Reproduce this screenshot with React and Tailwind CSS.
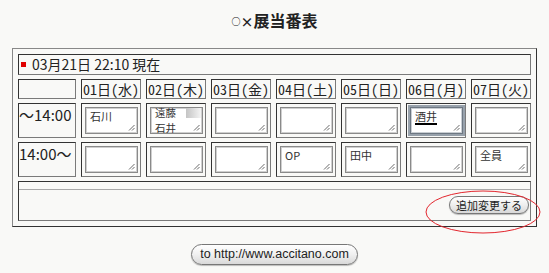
const days = ["01日(水)", "02日(木)", "03日(金)", "04日(土)", "05日(日)", "06日(月)", "07日(火)"];

const rows = [
  { label: "〜14:00", values: ["石川", "遠藤\n石井", "", "", "", "酒井", ""], focus: 5 },
  { label: "14:00〜", values: ["", "", "", "OP", "田中", "", "全員"], focus: -1 },
];

const jp = "font-['Noto_Sans_CJK_JP','Noto_Sans',sans-serif]";
const cell = "border border-t-[#333] border-l-[#333] border-b-[#7a7a7a] border-r-[#7a7a7a]";

function Grip() {
  return (
    <svg className="absolute right-[2px] bottom-[2px]" width="7" height="7" viewBox="0 0 7 7">
      <path d="M6.5 1 L1 6.5 M6.5 4 L4 6.5" stroke="#6a6a6a" strokeWidth="1" fill="none" />
    </svg>
  );
}

function Memo({ value, focused }) {
  const lines = value ? value.split("\n") : [];
  const multi = lines.length > 1;
  return (
    <div
      className={
        "relative h-full w-full bg-white px-[4px] text-[#333] " +
        (multi ? "text-[10.5px] leading-[15px]" : "text-[11px] leading-[15px] pt-[1px]") +
        (focused
          ? " border border-[#6d7782] shadow-[0_0_0_2px_#97a1ab,inset_0_0_0_1px_#c9ced3]"
          : " border border-[#8a8a8a] shadow-[inset_0_0_0_1px_#cfcfcf]")
      }
    >
      <div className={multi ? "-mt-[3px]" : ""}>
        {lines.map((l, i) => (
          <div key={i} className={focused ? "w-fit border-b-2 border-black leading-[13px] pt-[1px]" : ""}>
            {l}
          </div>
        ))}
      </div>
      {multi && (
        <div className="absolute right-[1px] top-[0px] h-[10px] w-[15px] bg-gradient-to-r from-[#c4c4c4] to-[#f4f4f4]" />
      )}
      <Grip />
    </div>
  );
}

export default function App() {
  return (
    <div className={"h-[273px] w-full bg-[#f9f9f7] text-[#222] " + jp}>
      <h1 className="pt-[10px] text-center text-[16px] font-bold leading-[20px]">
        <span className="text-[9px] align-[2px]">○</span>
        <span className="text-[13px]">×</span>
        展当番表
      </h1>

      <div className="relative mx-auto mt-[16px] w-[525px] border border-t-[#888] border-l-[#888] border-b-[#333] border-r-[#333] px-[5px] pt-[5px] pb-[5px]">
        <div className={"flex h-[21px] items-center gap-[6px] pl-[2px] text-[14px] " + cell}>
          <span className="h-[5px] w-[5px] bg-[#e00000]" />
          <span>03月21日 22:10 現在</span>
        </div>

        <div className="mt-[4px] grid grid-cols-[58px_repeat(7,minmax(0,1fr))] gap-x-[5px] gap-y-[4px] text-[14px]">
          <div className={"h-[20px] " + cell} />
          {days.map((d) => (
            <div key={d} className={"flex h-[20px] items-center justify-center leading-none [font-feature-settings:'hwid'] " + cell}>
              {d}
            </div>
          ))}
          {rows.map((r) => (
            <div key={r.label} className="contents">
              <div className={"h-[35px] whitespace-nowrap pt-[2px] text-[15px] leading-[18px] " + cell}>{r.label}</div>
              {r.values.map((v, i) => (
                <div key={i} className={"h-[35px] pl-[3px] pr-[2px] py-[3px] " + cell}>
                  <Memo value={v} focused={i === r.focus} />
                </div>
              ))}
            </div>
          ))}
        </div>

        <div className={"mt-[4px] flex h-[40px] flex-col " + cell}>
          <div className="h-[8px] border-b border-[#a8a8a8]" />
          <div className="flex flex-1 items-center justify-end pr-[1px]">
            <button className="h-[18px] rounded-full border border-[#777] bg-gradient-to-b from-white via-[#eeeeee] to-[#d8d8d8] px-[6px] text-[11px] leading-[16px] text-[#222] shadow-[0_1px_1px_rgba(0,0,0,0.25)]">
              追加変更する
            </button>
          </div>
        </div>

        <svg className="pointer-events-none absolute left-[412px] top-[141px]" width="116" height="44" viewBox="0 0 116 44">
          <ellipse cx="58" cy="22" rx="57" ry="21" fill="none" stroke="#e3262e" strokeWidth="1" />
        </svg>
      </div>

      <div className="mt-[17px] flex justify-center">
        <button className="h-[21px] w-[167px] rounded-full border border-[#777] bg-gradient-to-b from-white via-[#f0f0f0] to-[#d9d9d9] font-['Liberation_Sans',sans-serif] text-[12.5px] leading-[19px] text-[#222] shadow-[0_1px_1px_rgba(0,0,0,0.25)]">
          to http://www.accitano.com
        </button>
      </div>
    </div>
  );
}
